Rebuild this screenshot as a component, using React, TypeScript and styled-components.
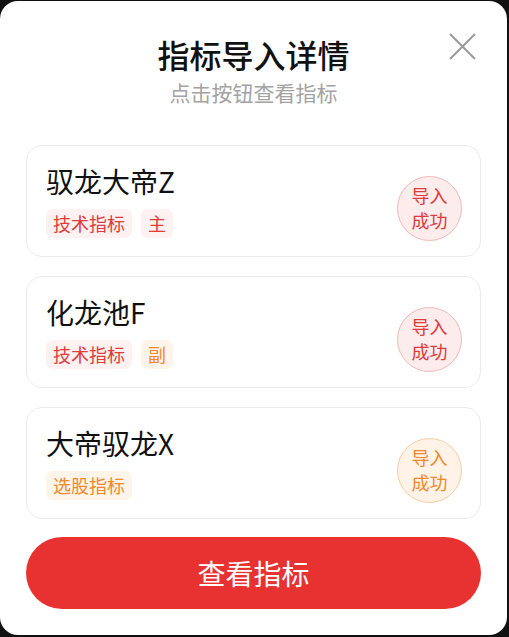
import React from "react";
import styled, { createGlobalStyle } from "styled-components";

const Global = createGlobalStyle`
  html, body { margin: 0; padding: 0; background: #111; }
  body { font-family: "Noto Sans CJK SC", "Noto Sans", sans-serif; }
  #root { width: 509px; height: 637px; }
`;

const Sheet = styled.div`
  position: relative;
  box-sizing: border-box;
  width: 507px;
  height: 634px;
  margin: 1px 2px 2px 0;
  background: #fff;
  border-radius: 18px;
  padding: 33px 26px 0 26px;
  display: flex;
  flex-direction: column;
`;

const Title = styled.h1`
  margin: 0;
  text-align: center;
  font-size: 32px;
  line-height: 40px;
  font-weight: 500;
  color: #111;
`;

const Subtitle = styled.p`
  margin: 3px 0 0;
  text-align: center;
  font-size: 21px;
  line-height: 30px;
  color: #a3a3a3;
`;

const Close = styled.button`
  position: absolute;
  top: 32px;
  right: 31px;
  width: 27px;
  height: 27px;
  padding: 0;
  border: none;
  background: none;
  cursor: pointer;
`;

const List = styled.div`
  margin-top: 38px;
  display: flex;
  flex-direction: column;
  gap: 19px;
`;

const Card = styled.div`
  box-sizing: border-box;
  height: 112px;
  border: 1px solid #ebebeb;
  border-radius: 16px;
  padding: 16px 18px 18px 19px;
  display: flex;
  align-items: center;
  justify-content: space-between;
`;

const Info = styled.div`
  display: flex;
  flex-direction: column;
  gap: 10px;
`;

const Name = styled.div`
  font-size: 28px;
  line-height: 36px;
  color: #111;
`;

const Tags = styled.div`
  display: flex;
  gap: 9px;
`;

type Tone = "red" | "orange";

const tone = {
  red: { text: "#e03a3a", bg: "#fdf1f1", fill: "#fdecec", border: "#f1b9b9" },
  orange: { text: "#f0892c", bg: "#fff4ea", fill: "#fff2e6", border: "#f8cda3" },
};

const Tag = styled.span<{ $tone: Tone }>`
  height: 29px;
  line-height: 29px;
  padding: 0 7px;
  border-radius: 7px;
  font-size: 18px;
  color: ${(p) => tone[p.$tone].text};
  background: ${(p) => tone[p.$tone].bg};
`;

const Badge = styled.div<{ $tone: Tone }>`
  box-sizing: border-box;
  width: 65px;
  height: 65px;
  margin-top: 16px;
  border-radius: 50%;
  border: 1px solid ${(p) => tone[p.$tone].border};
  background: ${(p) => tone[p.$tone].fill};
  color: ${(p) => tone[p.$tone].text};
  font-size: 18px;
  line-height: 25px;
  display: flex;
  flex-direction: column;
  align-items: center;
  justify-content: center;
`;

const Action = styled.button`
  margin-top: 18px;
  height: 72px;
  width: 100%;
  border: none;
  border-radius: 36px;
  background: #e83232;
  color: #fff;
  font-family: "Noto Sans CJK SC", "Noto Sans", sans-serif;
  font-size: 28px;
  cursor: pointer;
`;

const items: { name: string; tags: { label: string; tone: Tone }[]; tone: Tone }[] = [
  { name: "驭龙大帝Z", tags: [{ label: "技术指标", tone: "red" }, { label: "主", tone: "red" }], tone: "red" },
  { name: "化龙池F", tags: [{ label: "技术指标", tone: "red" }, { label: "副", tone: "orange" }], tone: "red" },
  { name: "大帝驭龙X", tags: [{ label: "选股指标", tone: "orange" }], tone: "orange" },
];

export default function App() {
  return (
    <>
      <Global />
      <Sheet>
        <Title>指标导入详情</Title>
        <Subtitle>点击按钮查看指标</Subtitle>
        <Close aria-label="关闭">
          <svg width="27" height="27" viewBox="0 0 27 27">
            <path d="M1 1 L26 26 M26 1 L1 26" stroke="#9a9a9a" strokeWidth="2" fill="none" />
          </svg>
        </Close>
        <List>
          {items.map((it) => (
            <Card key={it.name}>
              <Info>
                <Name>{it.name}</Name>
                <Tags>
                  {it.tags.map((t) => (
                    <Tag key={t.label} $tone={t.tone}>{t.label}</Tag>
                  ))}
                </Tags>
              </Info>
              <Badge $tone={it.tone}>
                <span>导入</span>
                <span>成功</span>
              </Badge>
            </Card>
          ))}
        </List>
        <Action>查看指标</Action>
      </Sheet>
    </>
  );
}
